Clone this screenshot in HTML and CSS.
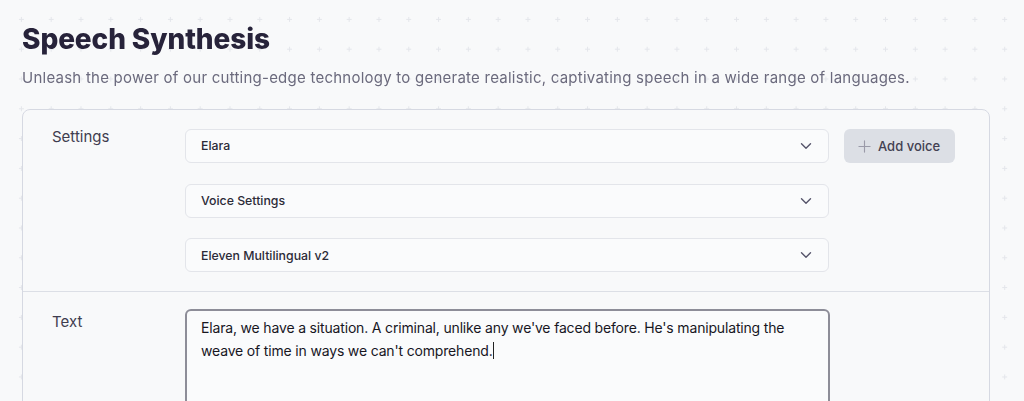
FILE: index.html
```html
<!DOCTYPE html>
<html lang="en">
<head>
<meta charset="utf-8">
<title>Speech Synthesis</title>
<link rel="stylesheet" href="styles.css">
</head>
<body>
<main class="page">
  <header class="head">
    <h1 class="title">Speech Synthesis</h1>
    <p class="subtitle">Unleash the power of our cutting-edge technology to generate realistic, captivating speech in a wide range of languages.</p>
  </header>
  <section class="card">
    <div class="row">
      <div class="label">Settings</div>
      <div class="fields">
        <div class="select-line">
          <div class="select"><span>Elara</span><svg class="chev" viewBox="0 0 12 8" width="12" height="8"><path d="M1.5 1.8 6 6.2l4.5-4.4" fill="none" stroke="currentColor" stroke-width="1.4" stroke-linecap="round" stroke-linejoin="round"/></svg></div>
          <button class="add-btn" type="button"><svg class="plus" viewBox="0 0 14 14" width="13" height="13"><path d="M7 1v12M1 7h12" stroke="currentColor" stroke-width="1.2" stroke-linecap="round"/></svg>Add voice</button>
        </div>
        <div class="select"><span>Voice Settings</span><svg class="chev" viewBox="0 0 12 8" width="12" height="8"><path d="M1.5 1.8 6 6.2l4.5-4.4" fill="none" stroke="currentColor" stroke-width="1.4" stroke-linecap="round" stroke-linejoin="round"/></svg></div>
        <div class="select"><span>Eleven Multilingual v2</span><svg class="chev" viewBox="0 0 12 8" width="12" height="8"><path d="M1.5 1.8 6 6.2l4.5-4.4" fill="none" stroke="currentColor" stroke-width="1.4" stroke-linecap="round" stroke-linejoin="round"/></svg></div>
      </div>
    </div>
    <div class="row text-row">
      <div class="label">Text</div>
      <div class="fields">
        <div class="textarea">Elara, we have a situation. A criminal, unlike any we've faced before. He's manipulating the weave of time in ways we can't comprehend.<span class="caret"></span></div>
      </div>
    </div>
  </section>
</main>
</body>
</html>
```
FILE: styles.css
```css
* { box-sizing: border-box; }
html, body { margin: 0; padding: 0; }
body {
  font-family: Inter, "Noto Sans", sans-serif;
  background-color: #f8f9fa;
  height: 401px;
  overflow: hidden;
}
.page {
  position: relative;
  height: 401px;
  padding: 22px 34px 0 22px;
  background-color: #f8f9fa;
  background-image:
    linear-gradient(90deg, transparent 14px, #e4e6eb 14px, #e4e6eb 15px, transparent 15px),
    linear-gradient(transparent 14px, #e4e6eb 14px, #e4e6eb 15px, transparent 15px);
  background-size: 29.8px 29.8px;
  background-position: 7px 5px;
}
.page::before {
  content: "";
  position: absolute;
  inset: 0;
  background-image:
    linear-gradient(90deg, #f8f9fa 12px, transparent 12px, transparent 17px, #f8f9fa 17px),
    linear-gradient(#f8f9fa 12px, transparent 12px, transparent 17px, #f8f9fa 17px);
  background-size: 29.8px 29.8px;
  background-position: 7px 5px;
  pointer-events: none;
  mix-blend-mode: lighten;
}
.head, .card { position: relative; z-index: 1; }
.title {
  margin: 0;
  font-size: 28px;
  line-height: 34px;
  font-weight: 800;
  color: #27233a;
  letter-spacing: -0.1px;
}
.subtitle {
  margin: 12px 0 0;
  font-size: 15px;
  line-height: 20px;
  letter-spacing: 0.24px;
  color: #6b6a7d;
}
.card {
  margin-top: 21px;
  background: #f8f9fa;
  border: 1px solid #d6d9e2;
  border-radius: 8px;
  height: 320px;
}
.row {
  display: flex;
  padding: 18px 0 19px 29px;
}
.row + .row { border-top: 1px solid #dcdfe6; }
.text-row { padding-top: 17px; }
.label {
  width: 133px;
  flex: none;
  font-size: 15px;
  line-height: 20px;
  color: #3f3d4f;
  margin-top: -1px;
}
.text-row .label { margin-top: 3px; }
.fields {
  display: flex;
  flex-direction: column;
  gap: 20.5px;
}
.select-line {
  display: flex;
  align-items: center;
  gap: 15px;
}
.select {
  width: 644px;
  height: 34px;
  display: flex;
  align-items: center;
  justify-content: space-between;
  padding: 0 16px 0 15px;
  background: #fafbfc;
  border: 1px solid #e3e5ea;
  border-radius: 6px;
  font-size: 12.3px;
  font-weight: 500;
  color: #2c2b38;
}
.chev { color: #55546a; }
.add-btn {
  display: flex;
  align-items: center;
  gap: 7px;
  height: 34px;
  width: 111px;
  padding: 0 0 0 14px;
  margin-top: 1px;
  border: none;
  border-radius: 6px;
  background: #dcdfe5;
  font-family: inherit;
  font-size: 13px;
  font-weight: 500;
  color: #434152;
}
.plus { color: #9a9aa8; }
.textarea {
  width: 645px;
  height: 110px;
  padding: 5px 14px;
  border: 2px solid #8d8d98;
  border-radius: 6px;
  background: #fafbfc;
  font-size: 14px;
  line-height: 23px;
  letter-spacing: -0.17px;
  color: #17161f;
}
.caret {
  display: inline-block;
  width: 1px;
  height: 17px;
  background: #222;
  vertical-align: -3px;
}
```
